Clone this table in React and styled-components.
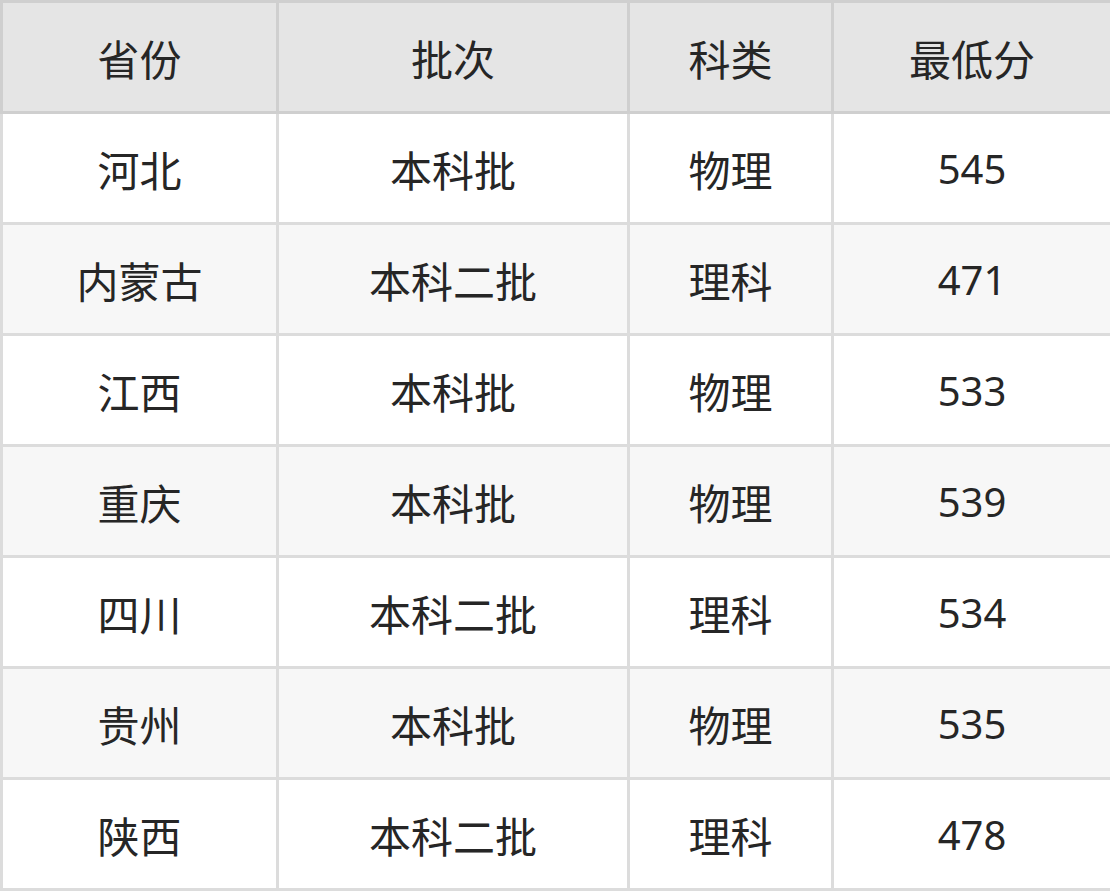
import React from 'react'
import styled, { createGlobalStyle } from 'styled-components'

const Global = createGlobalStyle`
  html, body { margin: 0; padding: 0; background: #fff; }
  body { font-family: "Noto Sans", "Noto Sans CJK SC", sans-serif; }
`

const Table = styled.table`
  width: 1110px;
  border-collapse: collapse;
  table-layout: fixed;
  color: #262626;
  font-size: 42px;
  text-align: center;
`

const Col = styled.col`
  width: ${p => p.$w}px;
`

const Th = styled.th`
  height: 108px;
  padding: 0;
  background: #e5e5e5;
  border: 3px solid #cfcfcf;
  font-weight: 400;
`

const Row = styled.tr`
  background: ${p => (p.$alt ? '#f7f7f7' : '#fff')};
`

const Td = styled.td`
  height: 108px;
  padding: 0;
  border: 3px solid #dcdcdc;
  font-size: ${p => (p.$num ? '40px' : '42px')};
`

const cols = [276, 351, 204, 279]

const rows = [
  ['河北', '本科批', '物理', '545'],
  ['内蒙古', '本科二批', '理科', '471'],
  ['江西', '本科批', '物理', '533'],
  ['重庆', '本科批', '物理', '539'],
  ['四川', '本科二批', '理科', '534'],
  ['贵州', '本科批', '物理', '535'],
  ['陕西', '本科二批', '理科', '478'],
]

export default function App() {
  return (
    <>
      <Global />
      <Table>
        <colgroup>
          {cols.map((w, i) => <Col key={i} $w={w} />)}
        </colgroup>
        <thead>
          <tr>
            <Th>省份</Th>
            <Th>批次</Th>
            <Th>科类</Th>
            <Th>最低分</Th>
          </tr>
        </thead>
        <tbody>
          {rows.map((r, i) => (
            <Row key={i} $alt={i % 2 === 1}>
              {r.map((c, j) => <Td key={j} $num={j === 3}>{c}</Td>)}
            </Row>
          ))}
        </tbody>
      </Table>
    </>
  )
}
